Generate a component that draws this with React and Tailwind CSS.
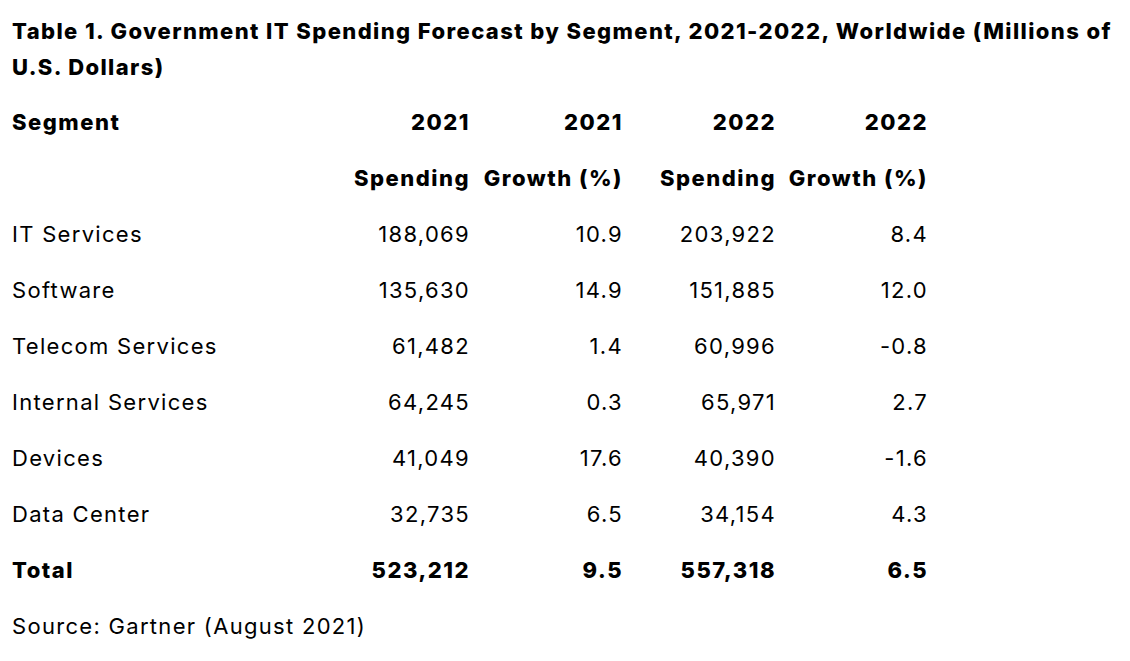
const rows = [
  ["IT Services", "188,069", "10.9", "203,922", "8.4"],
  ["Software", "135,630", "14.9", "151,885", "12.0"],
  ["Telecom Services", "61,482", "1.4", "60,996", "-0.8"],
  ["Internal Services", "64,245", "0.3", "65,971", "2.7"],
  ["Devices", "41,049", "17.6", "40,390", "-1.6"],
  ["Data Center", "32,735", "6.5", "34,154", "4.3"],
];

const grid = "grid grid-cols-[305px_153px_153px_153px_152px] h-[56px] items-center";

export default function App() {
  return (
    <div className="min-h-screen bg-white text-black px-3 pt-[13px] font-['Inter',sans-serif] tracking-[1.3px]">
      <h1 className="text-[22px] leading-[36px] font-extrabold tracking-[1.4px] whitespace-nowrap">
        Table 1. Government IT Spending Forecast by Segment, 2021-2022, Worldwide (Millions of
        <br />
        U.S. Dollars)
      </h1>

      <div className="mt-[9px] text-[22px]">
        <div className={`${grid} font-extrabold tracking-[1.5px]`}>
          <div>Segment</div>
          <div className="text-right">2021</div>
          <div className="text-right">2021</div>
          <div className="text-right">2022</div>
          <div className="text-right">2022</div>
        </div>
        <div className={`${grid} font-extrabold tracking-[1.5px]`}>
          <div></div>
          <div className="text-right">Spending</div>
          <div className="text-right">Growth (%)</div>
          <div className="text-right">Spending</div>
          <div className="text-right">Growth (%)</div>
        </div>
        {rows.map((r) => (
          <div key={r[0]} className={grid}>
            <div>{r[0]}</div>
            <div className="text-right">{r[1]}</div>
            <div className="text-right">{r[2]}</div>
            <div className="text-right">{r[3]}</div>
            <div className="text-right">{r[4]}</div>
          </div>
        ))}
        <div className={`${grid} font-extrabold tracking-[1.5px]`}>
          <div>Total</div>
          <div className="text-right">523,212</div>
          <div className="text-right">9.5</div>
          <div className="text-right">557,318</div>
          <div className="text-right">6.5</div>
        </div>
        <div className="h-[56px] flex items-center">Source: Gartner (August 2021)</div>
      </div>
    </div>
  );
}
